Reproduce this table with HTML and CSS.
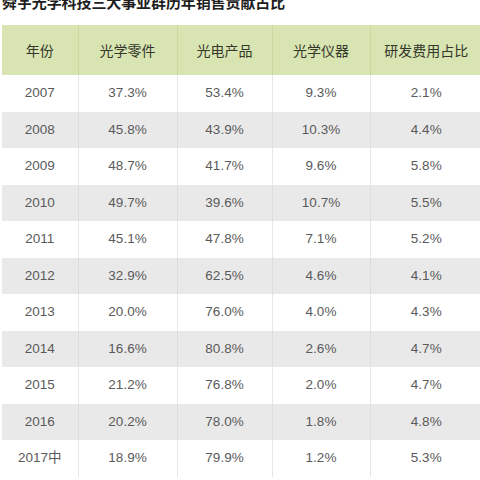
FILE: index.html
```html
<!DOCTYPE html>
<html lang="zh">
<head>
<meta charset="utf-8">
<link rel="stylesheet" href="styles.css">
</head>
<body>
<div class="title">舜宇光学科技三大事业群历年销售贡献占比</div>
<table class="data">
  <colgroup>
    <col class="c1"><col class="c2"><col class="c3"><col class="c4"><col class="c5">
  </colgroup>
  <thead>
    <tr><th>年份</th><th>光学零件</th><th>光电产品</th><th>光学仪器</th><th>研发费用占比</th></tr>
  </thead>
  <tbody>
    <tr><td>2007</td><td>37.3%</td><td>53.4%</td><td>9.3%</td><td>2.1%</td></tr>
    <tr><td>2008</td><td>45.8%</td><td>43.9%</td><td>10.3%</td><td>4.4%</td></tr>
    <tr><td>2009</td><td>48.7%</td><td>41.7%</td><td>9.6%</td><td>5.8%</td></tr>
    <tr><td>2010</td><td>49.7%</td><td>39.6%</td><td>10.7%</td><td>5.5%</td></tr>
    <tr><td>2011</td><td>45.1%</td><td>47.8%</td><td>7.1%</td><td>5.2%</td></tr>
    <tr><td>2012</td><td>32.9%</td><td>62.5%</td><td>4.6%</td><td>4.1%</td></tr>
    <tr><td>2013</td><td>20.0%</td><td>76.0%</td><td>4.0%</td><td>4.3%</td></tr>
    <tr><td>2014</td><td>16.6%</td><td>80.8%</td><td>2.6%</td><td>4.7%</td></tr>
    <tr><td>2015</td><td>21.2%</td><td>76.8%</td><td>2.0%</td><td>4.7%</td></tr>
    <tr><td>2016</td><td>20.2%</td><td>78.0%</td><td>1.8%</td><td>4.8%</td></tr>
    <tr><td>2017中</td><td>18.9%</td><td>79.9%</td><td>1.2%</td><td>5.3%</td></tr>
  </tbody>
</table>
</body>
</html>
```
FILE: styles.css
```css
html, body {
  margin: 0;
  padding: 0;
  background: #ffffff;
  overflow: hidden;
  width: 480px;
  height: 480px;
}
body {
  font-family: "Liberation Sans", "Noto Sans CJK SC", sans-serif;
}
.title {
  margin-top: -7px;
  height: 32px;
  padding-left: 2px;
  font-family: "Noto Sans CJK SC", sans-serif;
  font-weight: 700;
  font-size: 15px;
  line-height: 17px;
  color: #1e1e1e;
  white-space: nowrap;
  letter-spacing: -0.1px;
}
.data {
  margin-left: 2px;
  border-collapse: collapse;
  table-layout: fixed;
  width: 480px;
}
.c1 { width: 76px; }
.c2 { width: 99px; }
.c3 { width: 95px; }
.c4 { width: 98px; }
.c5 { width: 112px; }
.data th {
  height: 50px;
  padding: 0;
  background: #d8e4b2;
  color: #34372a;
  font-family: "Noto Sans CJK SC", sans-serif;
  font-weight: 400;
  font-size: 14px;
  line-height: 16px;
  text-align: center;
  border-left: 1px solid #cad8a0;
}
.data th:first-child, .data td:first-child { border-left: none; }
.data td {
  height: 36.5px;
  padding: 0;
  line-height: 16px;
  text-align: center;
  font-size: 13.5px;
  color: #5a5a5a;
  border-left: 1px solid #e6e6e6;
}
.data tbody tr:nth-child(even) td {
  background: #e9e9e9;
  border-left-color: #dedede;
}
```
